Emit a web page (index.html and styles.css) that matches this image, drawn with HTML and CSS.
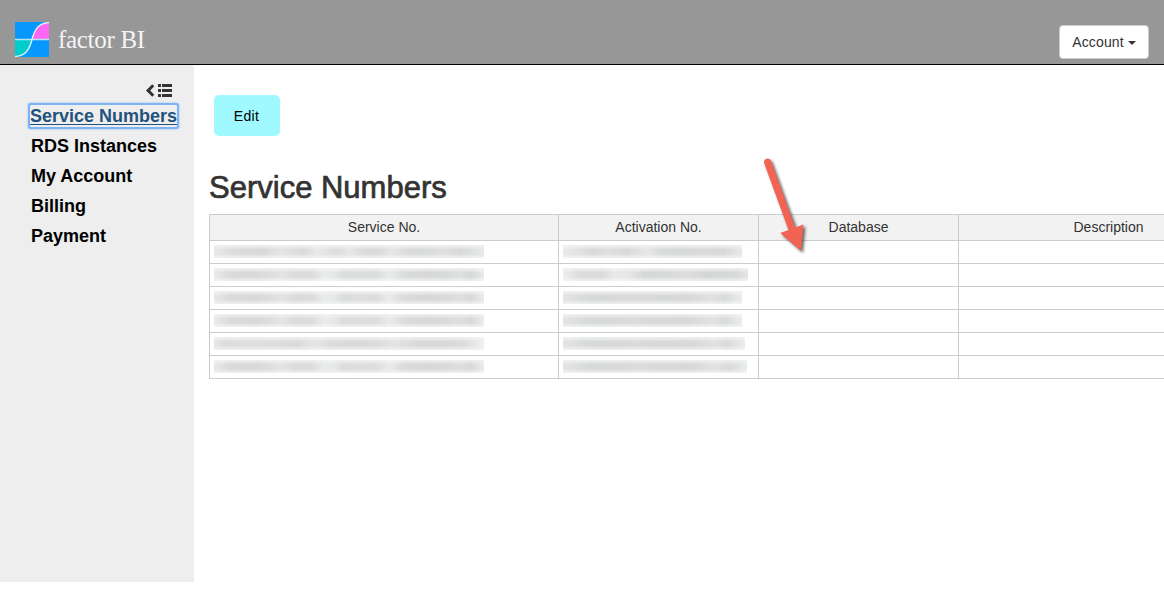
FILE: index.html
```
<!DOCTYPE html>
<html lang="en">
<head>
<meta charset="utf-8">
<title>factor BI - Service Numbers</title>
<link rel="stylesheet" href="styles.css">
</head>
<body>
<header class="topbar">
  <a class="brand">
    <svg class="brand-logo" viewBox="0 0 34 35">
      <rect width="34" height="35" fill="#0798fd"/>
      <path d="M17 17.5C19.5 8 23 1 34 .5V17.5Z" fill="#ff66f5"/>
      <path d="M0 17.5H17C14.5 27 11 34 0 34.5Z" fill="#00cccc"/>
      <path d="M0 17.5H34" stroke="#b9e4f5" stroke-width="1.5"/>
      <path d="M0 34.5C11 34 14.5 27 17 17.5S23 1 34 .5" fill="none" stroke="#e2f3fa" stroke-width="1.4"/>
    </svg>
    <span class="brand-name">factor BI</span>
  </a>
  <button class="account">Account<span class="caret"></span></button>
</header>
<div class="layout">
  <nav class="sidebar">
    <div class="collapse">
      <svg width="27" height="14" viewBox="0 0 27 14" fill="#333">
        <path d="M6.2 1.2 8.3 3.2 4.2 7.5 8.3 11.8 6.2 13.8 0 7.5Z"/>
        <path d="M12 1h3v3h-3zM16 1h10v3H16zM12 6h3v3h-3zM16 6h10v3H16zM12 11h3v3h-3zM16 11h10v3H16z"/>
      </svg>
    </div>
    <a class="nav-link active">Service Numbers</a>
    <a class="nav-link">RDS Instances</a>
    <a class="nav-link">My Account</a>
    <a class="nav-link">Billing</a>
    <a class="nav-link">Payment</a>
  </nav>
  <main class="content">
    <button class="edit">Edit</button>
    <h2 class="title">Service Numbers</h2>
    <table class="grid">
      <colgroup><col class="c-service"><col class="c-normal"><col class="c-normal"><col class="c-desc"></colgroup>
      <thead><tr><th>Service No.</th><th>Activation No.</th><th>Database</th><th>Description</th></tr></thead>
      <tbody>
        <tr><td><div class="mask long a"></div></td><td><div class="mask b" style="width:179px"></div></td><td></td><td></td></tr>
        <tr><td><div class="mask long"></div></td><td><div class="mask c" style="width:185px"></div></td><td></td><td></td></tr>
        <tr><td><div class="mask long"></div></td><td><div class="mask d" style="width:179px"></div></td><td></td><td></td></tr>
        <tr><td><div class="mask long"></div></td><td><div class="mask d" style="width:179px"></div></td><td></td><td></td></tr>
        <tr><td><div class="mask long e"></div></td><td><div class="mask d" style="width:182px"></div></td><td></td><td></td></tr>
        <tr><td><div class="mask long"></div></td><td><div class="mask d" style="width:184px"></div></td><td></td><td></td></tr>
      </tbody>
    </table>
  </main>
</div>
<svg class="arrow" width="60" height="110" viewBox="750 150 60 110">
  <path d="M764.2 163.2A3.4 3.4 0 0 1 771 161L795.2 227.5 803.5 224.5 801 251 780.2 233 788.5 230Z" fill="#f26354"/>
</svg>
</body>
</html>
```
FILE: styles.css
```
* { box-sizing: border-box; }
body {
  margin: 0;
  height: 616px;
  overflow: hidden;
  background: #fff;
  color: #333;
  font: 14px/20px "Liberation Sans", Arial, sans-serif;
}
button { font: inherit; }
.topbar {
  height: 65px;
  padding: 22px 15px 0;
  display: flex;
  justify-content: space-between;
  background: #979797;
  border-bottom: 1px solid #000;
}
.brand { display: flex; gap: 9px; }
.brand-logo { width: 34px; height: 35px; }
.brand-name {
  font: 25px/35px "Liberation Serif", serif;
  letter-spacing: -.3px;
  color: #f5f5f5;
}
.account {
  width: 90px;
  height: 34px;
  margin-top: 3px;
  padding: 0;
  display: flex;
  align-items: center;
  justify-content: center;
  gap: 4px;
  background: #fff;
  border: 1px solid #ccc;
  border-radius: 4px;
  color: #333;
  letter-spacing: .15px;
}
.caret {
  margin-top: 1px;
  border-top: 4px solid #333;
  border-left: 4px solid transparent;
  border-right: 4px solid transparent;
}
.layout { display: flex; }
.sidebar {
  flex: none;
  width: 194px;
  height: 517px;
  padding: 18px 0 0 30px;
  display: flex;
  flex-direction: column;
  align-items: flex-start;
  gap: 8px;
  background: #eee;
}
.collapse {
  align-self: flex-end;
  height: 14px;
  margin: 0 21px 0 0;
  display: flex;
}
.nav-link {
  padding: 0 0 0 1px;
  font-size: 18px;
  line-height: 22px;
  font-weight: bold;
  color: #000;
}
.nav-link.active {
  padding: 0;
  color: #23527c;
  text-decoration: underline;
  text-decoration-thickness: 1px;
  text-underline-offset: 2px;
  border-radius: 1px;
  box-shadow: 0 0 0 2px #7db4f5, 0 0 2px 2px #7db4f5;
}
.content {
  flex: 1;
  min-width: 0;
  padding: 30px 0 0 15px;
  overflow: hidden;
}
.edit {
  display: block;
  width: 66px;
  height: 41px;
  margin: 0 0 0 5px;
  padding: 0 1px 0 0;
  border: 0;
  border-radius: 5px;
  background: #9ff9ff;
  color: #000;
  letter-spacing: .3px;
}
.title {
  margin: 35px 0 10px;
  font-size: 31px;
  line-height: 33px;
  font-weight: normal;
  -webkit-text-stroke: .7px #333;
}
.grid {
  width: 1050px;
  table-layout: fixed;
  border-collapse: collapse;
}
.c-service { width: 349px; }
.c-normal { width: 200px; }
.c-desc { width: 300px; }
.grid th, .grid td { border: 1px solid #ccc; padding: 0; }
.grid th {
  height: 26px;
  padding-bottom: 2px;
  background: #f2f2f2;
  font-weight: normal;
}
.grid td { height: 23px; padding: 0 0 1px 4px; }
.mask {
  --fade: linear-gradient(#f4f4f4c0 0, #f4f4f490 15%, #f4f4f400 35%, #f4f4f400 70%, #f4f4f490 87%, #f4f4f4c0 100%);
  --tone: linear-gradient(90deg, #e8e9e9, #dadada 6%, #d8d9d8 16%, #dedede 21%, #e3e5e4 25%, #dbdbdb 30%, #dbdcdc 36%, #eaecec 41%, #e7e9e9 44%, #dbdcdc 48%, #dddede 54%, #dcdedd 60%, #e9ebeb 65%, #dbdddc 70%, #d6d8d7 78%, #d9dada 86%, #dedfdf 91%, #d7d8d8 95%, #e9ecec);
  height: 13px;
  background: var(--fade), var(--tone);
}
.long { width: 270px; }
.a { --tone: linear-gradient(90deg, #e7e8e8, #dbdbdb 8%, #d9d9d9 19%, #e4e5e5 24%, #dadada 33%, #e9e9e9 38%, #e1e2e2 42%, #dcdddd 46%, #e8e8e8 50%, #dbdbdb 56%, #dadada 61%, #e7e7e7 66%, #d8d9d9 73%, #dbdcdc 81%, #e0e0e0 85%, #d8d9d9 91%, #e6eaea); }
.b { --tone: linear-gradient(90deg, #e9e9e9, #e3e3e3 8%, #dadada 17%, #e0e0e0 24%, #d9d9d9 36%, #e9e8e8 47%, #dadddd 54%, #d6d9d9 65%, #dadada 76%, #d9d9d9 90%, #e9e9e9); }
.c { --tone: linear-gradient(90deg, #eee, #dadada 10%, #dadbdb 21%, #e8e9e9 28%, #e6e6e6 35%, #d6d8d8 44%, #d8d9d9 58%, #dddddd 67%, #d4d7d7 78%, #d8d9d9 93%, #e4e6e6); }
.d { --tone: linear-gradient(90deg, #e4e4e4, #d7dada 15%, #d8d9d9 28%, #dbdbdb 40%, #d7d9d9 55%, #d8d8d8 70%, #e2e2e4 83%, #d9dada 90%, #e8edee); }
.e { --tone: linear-gradient(90deg, #e6e8e6, #dbdcdb 5%, #e0e0e0 12%, #dedede 21%, #d9dbdb 31%, #e6e6e6 37%, #dadddc 44%, #d9dada 54%, #dcdddd 61%, #e4e4e4 66%, #d8dad9 76%, #d7d9d9 85%, #dcdddd 93%, #f1f1f1); }
/* annotation floating over the table */
.arrow {
  position: absolute;
  left: 750px;
  top: 150px;
  overflow: visible;
  filter: drop-shadow(2px 2px 1.5px rgba(0, 0, 0, .6));
}
```
